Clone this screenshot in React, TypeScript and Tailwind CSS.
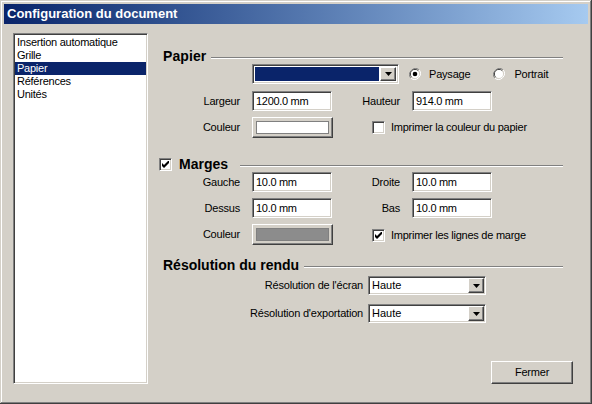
import React from "react";

const font = "font-['Liberation_Sans',Arial,sans-serif]";
const sunken =
  "border border-t-[#808080] border-l-[#808080] border-b-white border-r-white shadow-[inset_1px_1px_#404040,inset_-1px_-1px_#d4d0c8]";
const raised =
  "border border-t-white border-l-white border-b-[#404040] border-r-[#404040] shadow-[inset_-1px_-1px_#808080]";

function Arrow() {
  return (
    <div className={`w-[16px] h-full ${raised} bg-[#d4d0c8] flex items-center justify-center`}>
      <svg width="7" height="4" viewBox="0 0 7 4">
        <path d="M0 0h7L3.5 4z" fill="#000" />
      </svg>
    </div>
  );
}

function Heading({ children, lineStart }: { children: React.ReactNode; lineStart?: boolean }) {
  return (
    <div className="flex items-center h-[16px]">
      {children}
      <div className={`flex-1 ${lineStart ? "ml-[12px]" : "ml-[5px]"} mt-[4px] h-[2px] border-t border-t-[#808080] border-b border-b-white`} />
    </div>
  );
}

function Field({ value }: { value: string }) {
  return (
    <div className={`w-[80px] h-[20px] bg-white ${sunken} flex items-center pl-[3px] text-[11px] tracking-[-0.3px] text-black`}>
      {value}
    </div>
  );
}

function Check({ checked }: { checked?: boolean }) {
  return (
    <div className={`w-[13px] h-[13px] bg-white ${sunken} flex items-center justify-center`}>
      {checked && (
        <svg width="7" height="7" viewBox="0 0 7 7">
          <path d="M0 2L2 4L7 -1V2L2 7L0 5z" fill="#000" />
        </svg>
      )}
    </div>
  );
}

function Radio({ on }: { on?: boolean }) {
  return (
    <svg width="12" height="12" viewBox="0 0 12 12">
      <path d="M10.2 1.8A6 6 0 0 0 1.8 10.2" stroke="#808080" fill="none" />
      <path d="M1.8 10.2A6 6 0 0 0 10.2 1.8" stroke="#fff" fill="none" />
      <path d="M9.2 2.8A4.5 4.5 0 0 0 2.8 9.2" stroke="#404040" fill="none" />
      <circle cx="6" cy="6" r="4" fill="#fff" />
      {on && <circle cx="6" cy="6" r="2.3" fill="#000" />}
    </svg>
  );
}

function Swatch({ color }: { color: string }) {
  return (
    <div className={`w-[81px] h-[21px] ${raised} bg-[#d4d0c8] p-[3px]`}>
      <div className={`w-full h-full border border-[#808080] ${color}`} />
    </div>
  );
}

function Combo({ value }: { value: string }) {
  return (
    <div className={`w-[118px] h-[19px] bg-white ${sunken} flex items-stretch p-[1px]`}>
      <div className="flex-1 pl-[2px] flex items-center text-[11px] text-black">{value}</div>
      <Arrow />
    </div>
  );
}

const items = ["Insertion automatique", "Grille", "Papier", "Références", "Unités"];

export default function App() {
  return (
    <div
      className={`w-[592px] h-[404px] bg-[#d4d0c8] p-[4px] flex flex-col ${font} shadow-[inset_-1px_-1px_#404040,inset_1px_1px_#d4d0c8,inset_-2px_-2px_#808080,inset_2px_2px_#fff]`}
    >
      {/* Title bar */}
      <div className="h-[21px] bg-gradient-to-r from-[#0a246a] to-[#a6caf0] flex items-center pl-[3px]">
        <span className="text-white font-bold text-[13px]">Configuration du document</span>
      </div>

      <div className="flex-1 flex pl-[9px] pt-[9px] pb-[16px] text-[11px] text-black">
        {/* Left list */}
        <div className={`w-[135px] h-[351px] bg-white ${sunken} pt-[2px] px-[1px]`}>
          {items.map((it) => (
            <div
              key={it}
              className={`h-[13px] leading-[13px] pl-[2px] tracking-[-0.25px] ${
                it === "Papier" ? "bg-[#0a246a] text-white" : ""
              }`}
            >
              {it}
            </div>
          ))}
        </div>

        {/* Right panel */}
        <div className="ml-[15px] w-[400px] flex flex-col pt-[15px]">
          <Heading>
            <span className="font-bold text-[14px] tracking-[0.1px]">Papier</span>
          </Heading>

          <div className="flex items-center h-[20px] mt-[0px] pl-[89px]">
            <div className={`w-[147px] h-[20px] bg-white ${sunken} flex items-stretch p-[2px]`}>
              <div className="flex-1 bg-[#0a246a] mr-[1px]" />
              <Arrow />
            </div>
            <div className="ml-[10px] flex items-center">
              <Radio on />
              <span className="ml-[8px] tracking-[-0.2px]">Paysage</span>
            </div>
            <div className="ml-[23px] flex items-center">
              <Radio />
              <span className="ml-[9px] tracking-[-0.2px]">Portrait</span>
            </div>
          </div>

          <div className="flex items-center h-[20px] mt-[7px]">
            <span className="w-[77px] text-right tracking-[-0.2px]">Largeur</span>
            <div className="ml-[12px]"><Field value="1200.0 mm" /></div>
            <span className="w-[68px] text-right tracking-[-0.2px]">Hauteur</span>
            <div className="ml-[12px]"><Field value="914.0 mm" /></div>
          </div>

          <div className="flex items-center h-[21px] mt-[6px]">
            <span className="w-[77px] text-right tracking-[-0.2px]">Couleur</span>
            <div className="ml-[12px]"><Swatch color="bg-white" /></div>
            <div className="ml-[39px] flex items-center">
              <Check />
              <span className="ml-[6px] tracking-[-0.25px]">Imprimer la couleur du papier</span>
            </div>
          </div>

          <div className="mt-[18px] -ml-[4px]">
            <Heading lineStart>
              <Check checked />
              <span className="ml-[7px] font-bold text-[14px]">Marges</span>
            </Heading>
          </div>

          <div className="flex items-center h-[20px] mt-[0px]">
            <span className="w-[77px] text-right tracking-[-0.2px]">Gauche</span>
            <div className="ml-[12px]"><Field value="10.0 mm" /></div>
            <span className="w-[68px] text-right tracking-[-0.2px]">Droite</span>
            <div className="ml-[12px]"><Field value="10.0 mm" /></div>
          </div>

          <div className="flex items-center h-[20px] mt-[6px]">
            <span className="w-[77px] text-right tracking-[-0.2px]">Dessus</span>
            <div className="ml-[12px]"><Field value="10.0 mm" /></div>
            <span className="w-[68px] text-right tracking-[-0.2px]">Bas</span>
            <div className="ml-[12px]"><Field value="10.0 mm" /></div>
          </div>

          <div className="flex items-center h-[21px] mt-[6px]">
            <span className="w-[77px] text-right tracking-[-0.2px]">Couleur</span>
            <div className="ml-[12px]"><Swatch color="bg-[#8c8c8c]" /></div>
            <div className="ml-[39px] flex items-center mt-[2px]">
              <Check checked />
              <span className="ml-[6px] tracking-[-0.25px]">Imprimer les lignes de marge</span>
            </div>
          </div>

          <div className="mt-[12px]">
            <Heading>
              <span className="font-bold text-[14px]">Résolution du rendu</span>
            </Heading>
          </div>

          <div className="flex items-center h-[19px] mt-[3px]">
            <span className="w-[200px] text-right tracking-[-0.2px]">Résolution de l'écran</span>
            <div className="ml-[5px]"><Combo value="Haute" /></div>
          </div>

          <div className="flex items-center h-[19px] mt-[9px]">
            <span className="w-[200px] text-right tracking-[-0.2px]">Résolution d'exportation</span>
            <div className="ml-[5px]"><Combo value="Haute" /></div>
          </div>

          <div className="flex-1" />
          <div className="flex justify-end mr-[-10px]">
            <button
              className={`w-[82px] h-[23px] ${raised} bg-[#d4d0c8] text-[11px] text-black tracking-[-0.2px]`}
            >
              Fermer
            </button>
          </div>
        </div>
      </div>
    </div>
  );
}
